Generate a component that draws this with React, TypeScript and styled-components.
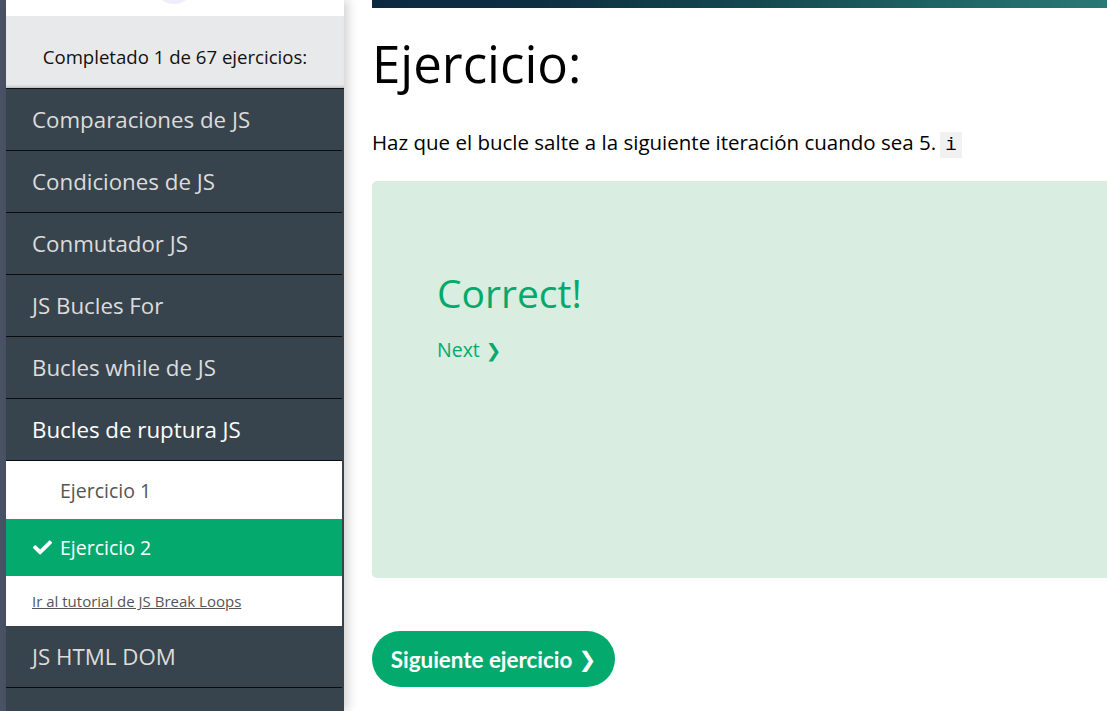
import React from "react";
import styled, { createGlobalStyle } from "styled-components";
import { FaCheck } from "react-icons/fa";

const Global = createGlobalStyle`
  html, body { margin: 0; padding: 0; background: #fff; overflow: hidden; }
  body { font-family: "Open Sans", "Noto Sans", sans-serif; }
  * { box-sizing: border-box; }
`;

const Page = styled.div`
  display: flex;
  width: 1107px;
  height: 711px;
  overflow: hidden;
`;

const Rail = styled.div`
  width: 6px;
  flex: none;
  background: #4a5366;
`;

const Sidebar = styled.aside`
  width: 338px;
  flex: none;
  background: #38444d;
  box-shadow: 4px 0 10px rgba(0, 0, 0, 0.18);
  position: relative;
  z-index: 1;
  display: flex;
  flex-direction: column;
  & > * { flex: none; }
`;

const Avatar = styled.div`
  height: 16px;
  background: #fff;
  display: flex;
  justify-content: center;
  overflow: hidden;
`;

const AvatarCircle = styled.div`
  width: 40px;
  height: 40px;
  border-radius: 50%;
  background: #f1ecfc;
  margin-top: -36px;
  margin-left: -2px;
`;

const Progress = styled.div`
  height: 73px;
  background: #e8e9eb;
  box-shadow: inset 0 -3px 3px -2px rgba(0, 0, 0, 0.25);
  border-bottom: 1px solid #111;
  display: flex;
  align-items: center;
  justify-content: center;
  padding-top: 8px;
  font-size: 18.6px;
  color: #111;
`;

const List = styled.nav`
  margin-right: 2px;
  display: flex;
  flex-direction: column;
  & > * { flex: none; }
`;

const Topic = styled.div<{ $active?: boolean }>`
  height: 62px;
  border-bottom: 1px solid #0c0c0c;
  padding-left: 26px;
  display: flex;
  align-items: center;
  font-size: 22.3px;
  color: ${(p) => (p.$active ? "#fff" : "#dcdcdc")};
`;

const Exercise = styled.div<{ $done?: boolean }>`
  height: ${(p) => (p.$done ? "57px" : "58px")};
  display: flex;
  align-items: center;
  gap: 8px;
  padding-left: ${(p) => (p.$done ? "27px" : "54px")};
  font-size: 19.5px;
  background: ${(p) => (p.$done ? "#04aa6d" : "#fff")};
  color: ${(p) => (p.$done ? "#fff" : "#555")};
`;

const TutorialRow = styled.div`
  height: 50px;
  background: #fff;
  padding-left: 26px;
  display: flex;
  align-items: center;
`;

const TutorialLink = styled.a`
  font-size: 15px;
  color: #555;
  text-decoration: underline;
`;

const Main = styled.main`
  flex: 1;
  min-width: 0;
  padding-left: 28px;
  display: flex;
  flex-direction: column;
  & > * { flex: none; }
`;

const Banner = styled.div`
  height: 8px;
  width: 760px;
  background: linear-gradient(90deg, #0b2a40 0%, #0d2f42 22%, #14484f 50%, #1f6464 75%, #2b7b78 100%);
`;

const Title = styled.h1`
  margin: 20px 0 0;
  font-weight: 400;
  font-size: 51px;
  line-height: 70px;
  color: #000;
`;

const Prompt = styled.p`
  margin: 30px 0 0;
  font-size: 20.5px;
  line-height: 28px;
  color: #000;
`;

const Code = styled.code`
  font-family: "Liberation Mono", "DejaVu Sans Mono", monospace;
  font-size: 19px;
  background: #f1f1f1;
  padding: 2px 5px;
  margin-left: 4px;
`;

const ResultBox = styled.section`
  margin-top: 22px;
  width: 780px;
  height: 397px;
  background: #d9ede1;
  border-radius: 5px;
  padding: 90px 0 0 65px;
`;

const Correct = styled.div`
  font-size: 39px;
  line-height: 44px;
  color: #04aa6d;
`;

const NextLink = styled.a`
  display: inline-block;
  margin-top: 21px;
  font-size: 19.5px;
  color: #04aa6d;
  text-decoration: none;
`;

const Chevron = styled.span`
  font-family: "DejaVu Sans", sans-serif;
  font-weight: 700;
  font-size: 0.95em;
  margin-left: 6px;
`;

const NextButton = styled.button`
  margin-top: 53px;
  align-self: flex-start;
  height: 56px;
  width: 243px;
  border: none;
  border-radius: 28px;
  background: #04aa6d;
  color: #fff;
  font-family: "Lato", "Open Sans", sans-serif;
  font-weight: 700;
  font-size: 22.4px;
  display: flex;
  align-items: center;
  justify-content: center;
  padding: 0;
`;

const topics = [
  "Comparaciones de JS",
  "Condiciones de JS",
  "Conmutador JS",
  "JS Bucles For",
  "Bucles while de JS",
];

export default function App() {
  return (
    <>
      <Global />
      <Page>
        <Rail />
        <Sidebar>
          <Avatar>
            <AvatarCircle />
          </Avatar>
          <Progress>Completado 1 de 67 ejercicios:</Progress>
          <List>
            {topics.map((t) => (
              <Topic key={t}>{t}</Topic>
            ))}
            <Topic $active>Bucles de ruptura JS</Topic>
            <Exercise>Ejercicio 1</Exercise>
            <Exercise $done>
              <FaCheck size={19} />
              Ejercicio 2
            </Exercise>
            <TutorialRow>
              <TutorialLink href="#">Ir al tutorial de JS Break Loops</TutorialLink>
            </TutorialRow>
            <Topic>JS HTML DOM</Topic>
          </List>
        </Sidebar>
        <Main>
          <Banner />
          <Title>Ejercicio:</Title>
          <Prompt>
            Haz que el bucle salte a la siguiente iteración cuando sea 5.<Code>i</Code>
          </Prompt>
          <ResultBox>
            <Correct>Correct!</Correct>
            <NextLink href="#">
              Next<Chevron>❯</Chevron>
            </NextLink>
          </ResultBox>
          <NextButton>
            Siguiente ejercicio<Chevron>❯</Chevron>
          </NextButton>
        </Main>
      </Page>
    </>
  );
}
